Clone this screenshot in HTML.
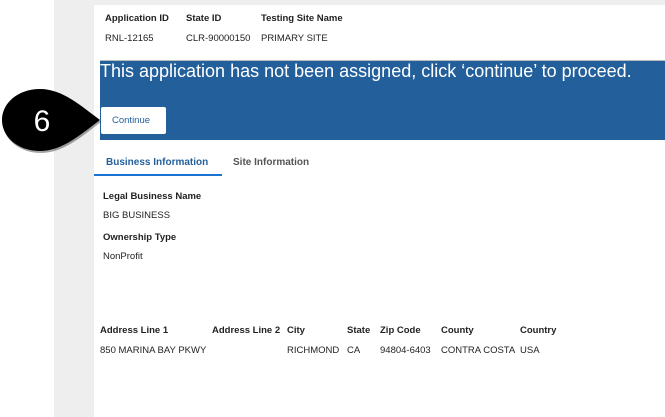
<!DOCTYPE html>
<html><head><style>
body{margin:0;width:665px;height:417px;position:relative;overflow:hidden;background:#fff;font-family:"Liberation Sans",sans-serif;color:#222}
.a{position:absolute;white-space:nowrap;font-size:9.5px}
.b{font-weight:bold}
</style></head><body>
<div style="position:absolute;left:54px;top:0;width:40px;height:417px;background:#eeeeee"></div>
<div style="position:absolute;left:94px;top:0;width:571px;height:5px;background:#eeeeee"></div>
<div class="a b" style="left:105px;top:13px">Application ID</div>
<div class="a b" style="left:186px;top:13px">State ID</div>
<div class="a b" style="left:261px;top:13px">Testing Site Name</div>
<div class="a" style="left:105px;top:33px">RNL-12165</div>
<div class="a" style="left:186px;top:33px">CLR-90000150</div>
<div class="a" style="left:261px;top:33px">PRIMARY SITE</div>
<div style="position:absolute;left:100px;top:60px;width:565px;height:1px;background:#bbb"></div>
<div style="position:absolute;left:100px;top:61px;width:565px;height:79px;background:#23609b"></div>
<div class="a" style="left:100px;top:61px;font-size:18px;color:#fff">This application has not been assigned, click ‘continue’ to proceed.</div>
<div style="position:absolute;left:101px;top:107px;width:65px;height:27px;background:#fff;border-radius:2px"></div>
<div class="a" style="left:112px;top:115px;color:#23609b">Continue</div>
<svg style="position:absolute;left:0;top:85px" width="110" height="70"><path d="M40 4 C62 4 80 20 100 35 C80 50 62 66 40 66 C18 66 2 52 2 35 C2 18 18 4 40 4Z" fill="#000" transform="translate(1,2)" opacity=".35"/><path d="M40 4 C62 4 80 20 100 35 C80 50 62 66 40 66 C18 66 2 52 2 35 C2 18 18 4 40 4Z" fill="#000"/><text x="42" y="46" font-size="30" fill="#fff" text-anchor="middle" font-family="Liberation Sans">6</text></svg>
<div class="a b" style="left:106px;top:157px;color:#23609b;font-size:10px">Business Information</div>
<div class="a b" style="left:233px;top:157px;color:#555;font-size:10px">Site Information</div>
<div style="position:absolute;left:94px;top:174px;width:128px;height:2px;background:#1a73d0"></div>
<div class="a b" style="left:103px;top:191px">Legal Business Name</div>
<div class="a" style="left:103px;top:210px">BIG BUSINESS</div>
<div class="a b" style="left:103px;top:232px">Ownership Type</div>
<div class="a" style="left:103px;top:251px">NonProfit</div>
<div class="a b" style="left:100px;top:325px">Address Line 1</div>
<div class="a b" style="left:212px;top:325px">Address Line 2</div>
<div class="a b" style="left:287px;top:325px">City</div>
<div class="a b" style="left:347px;top:325px">State</div>
<div class="a b" style="left:380px;top:325px">Zip Code</div>
<div class="a b" style="left:441px;top:325px">County</div>
<div class="a b" style="left:520px;top:325px">Country</div>
<div class="a" style="left:100px;top:345px">850 MARINA BAY PKWY</div>
<div class="a" style="left:287px;top:345px">RICHMOND</div>
<div class="a" style="left:347px;top:345px">CA</div>
<div class="a" style="left:380px;top:345px">94804-6403</div>
<div class="a" style="left:441px;top:345px">CONTRA COSTA</div>
<div class="a" style="left:520px;top:345px">USA</div>
</body></html>
